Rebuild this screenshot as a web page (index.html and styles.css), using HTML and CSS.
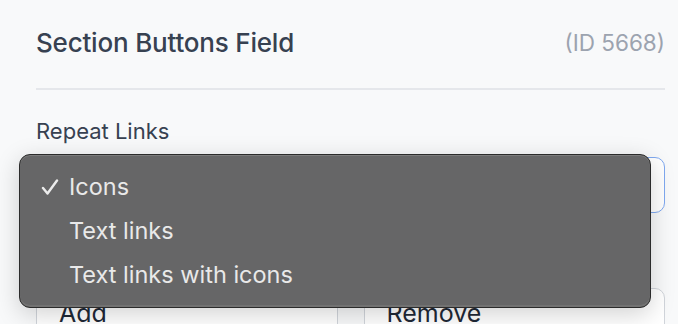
FILE: index.html
```html
<!DOCTYPE html>
<html lang="en">
<head>
    <meta charset="UTF-8">
    <title>Section Buttons Field</title>
    <link rel="stylesheet" href="styles.css">
</head>
<body>
    <div class="panel">
        <div class="panel-header">
            <h2 class="panel-title">Section Buttons Field</h2>
            <span class="panel-id">(ID 5668)</span>
        </div>
        <hr class="divider">

        <label class="field-label">Repeat Links</label>
        <div class="select-box">
            <!-- Menu nativo aberto -->
            <ul class="menu">
                <li class="menu-item selected">
                    <svg class="check" width="18" height="17" viewBox="0 0 18 17">
                        <path d="M2 9 L6.5 14.5 L16 1.5" fill="none" stroke="#ececec" stroke-width="2.4" stroke-linecap="round" stroke-linejoin="round"/>
                    </svg>
                    Icons
                </li>
                <li class="menu-item">Text links</li>
                <li class="menu-item">Text links with icons</li>
            </ul>
        </div>

        <div class="button-row">
            <button class="btn">Add</button>
            <button class="btn">Remove</button>
        </div>
    </div>
</body>
</html>
```

FILE: styles.css
```css
:root {
    --text: #374151;
    --muted: #9ca3af;
    --border: #e5e7eb;
    --focus: #7fa9f0;
    --menu-bg: #666667;
    --menu-text: #e9e9e9;
}

* {
    box-sizing: border-box;
    margin: 0;
    padding: 0;
    font-family: 'Inter', 'Noto Sans', Arial, sans-serif;
}

body {
    background-color: #f8f9fa;
    color: var(--text);
    overflow: hidden;
}

.panel {
    padding: 24px 13px 0 36px;
}

.panel-header {
    display: flex;
    justify-content: space-between;
    align-items: center;
    height: 36px;
}

.panel-title {
    font-size: 26px;
    font-weight: 500;
    letter-spacing: -0.2px;
    color: var(--text);
}

.panel-id {
    font-size: 22.5px;
    color: var(--muted);
}

.divider {
    border: none;
    border-top: 2px solid var(--border);
    margin-top: 28px;
}

.field-label {
    display: block;
    margin-top: 29px;
    font-size: 22px;
    line-height: 24px;
}

/* Select com foco */
.select-box {
    position: relative;
    margin-top: 14px;
    height: 56px;
    border: 1px solid var(--focus);
    border-radius: 10px;
    background: #fff;
}

.menu {
    position: absolute;
    left: -18px;
    top: -4px;
    width: 632px;
    height: 154px;
    list-style: none;
    padding: 10px 0 11px;
    background-color: var(--menu-bg);
    border: 1px solid #2b2b2b;
    border-radius: 11px;
    box-shadow: inset 0 1px 0 #7c7c7c, inset 0 -2px 0 #727272, 0 6px 24px rgba(0,0,0,0.18);
    z-index: 10;
}

.menu-item {
    position: relative;
    height: 44px;
    line-height: 44px;
    padding-left: 49px;
    font-size: 23.5px;
    color: var(--menu-text);
}

.check {
    position: absolute;
    left: 21px;
    top: 14px;
}

.button-row {
    display: flex;
    gap: 26px;
    margin-top: 75px;
}

.btn {
    flex: 1;
    height: 50px;
    text-align: left;
    padding: 6px 22px;
    font-size: 25px;
    color: #1f2937;
    background: #fff;
    border: 1px solid #d1d5db;
    border-radius: 10px;
}
```
